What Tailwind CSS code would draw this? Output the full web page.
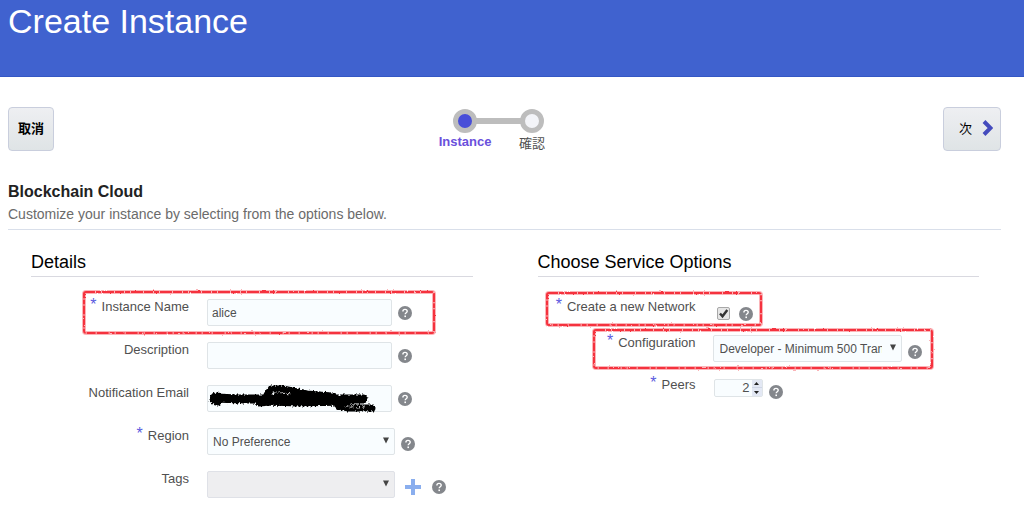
<!DOCTYPE html>
<html lang="ja">
<head>
    <meta charset="UTF-8">
    <meta name="viewport" content="width=device-width, initial-scale=1.0">
    <title>Create Instance</title>
    <script src="https://cdn.jsdelivr.net/npm/@tailwindcss/browser@4"></script>
    <style>
        body {
            font-family: 'Liberation Sans', 'Noto Sans CJK JP', sans-serif;
        }
        input[type="number"]::-webkit-inner-spin-button {
            appearance: none;
        }
    </style>
</head>
<body class="bg-white text-[13px] text-[#505050]">

    <!-- Shared icons -->
    <svg class="hidden">
        <symbol id="help" viewBox="0 0 14 14">
            <circle cx="7" cy="7" r="7" fill="#84878c"/>
            <path d="M4.9 5.5C4.9 4.1 5.8 3.4 7 3.4S9.2 4.1 9.2 5.3C9.2 6.7 7.2 6.8 7.2 8.3" fill="none" stroke="#fff" stroke-width="1.4"/>
            <rect x="6.4" y="9.5" width="1.6" height="1.6" fill="#fff"/>
        </symbol>
        <symbol id="arrow" viewBox="0 0 6 7">
            <path d="M0 0.5H6L3 6.5Z" fill="#444"/>
        </symbol>
        <filter id="rough" x="-5%" y="-20%" width="110%" height="140%">
            <feTurbulence type="fractalNoise" baseFrequency="0.35" numOctaves="2" seed="4"/>
            <feDisplacementMap in="SourceGraphic" scale="2"/>
        </filter>
        <filter id="scribble" x="-5%" y="-20%" width="110%" height="140%">
            <feTurbulence type="fractalNoise" baseFrequency="0.5" numOctaves="2" seed="7"/>
            <feDisplacementMap in="SourceGraphic" scale="5" xChannelSelector="R" yChannelSelector="G"/>
        </filter>
    </svg>

    <header class="h-[77px] bg-[#4062cf] border-b border-[#3457c4] px-2">
        <h1 class="text-[34px] leading-[42px] text-white">Create Instance</h1>
    </header>

    <main class="pl-2 pr-[23px] pt-[30px]">
        <!-- Wizard navigation -->
        <div class="flex items-start justify-between">
            <button class="h-11 w-[46px] rounded-sm border border-[#c9cedd] bg-linear-to-b from-[#eeeff2] to-[#dfe4e6] text-[13px] font-bold text-black">取消</button>
            <ol class="relative flex w-[134px] pt-[2px]">
                <li class="flex w-[67px] flex-col items-center">
                    <span class="z-10 size-6 rounded-full border-5 border-[#bdbdbd] bg-[#484ed8]"></span>
                    <span class="text-[13px] leading-[18px] font-bold text-[#6a50dc]">Instance</span>
                </li>
                <li class="flex w-[67px] flex-col items-center">
                    <span class="z-10 size-6 rounded-full border-5 border-[#bdbdbd] bg-[#f3f4f8]"></span>
                    <span class="text-[13px] leading-[22px]">確認</span>
                </li>
                <li class="absolute top-[11px] left-10 h-[6px] w-[54px] bg-[#bdbdbd]" aria-hidden="true"></li>
            </ol>
            <button class="flex h-11 w-[58px] items-center justify-between rounded-sm border border-[#c9cedd] bg-linear-to-b from-[#eeeff2] to-[#dfe4e6] pr-[7px] pl-[15px] text-[13px] text-black">
                次
                <svg class="h-[18px] w-[11px]" viewBox="0 0 11 18"><path d="M2 1.5L8.5 8L2 14.5" fill="none" stroke="#444bbd" stroke-width="4"/></svg>
            </button>
        </div>

        <div class="mt-[27px] border-b border-[#d9dfea] pb-[5px]">
            <h2 class="text-base leading-5 font-bold text-[#222]">Blockchain Cloud</h2>
            <p class="mt-[2px] text-sm leading-5 text-[#6b6b6b]">Customize your instance by selecting from the options below.</p>
        </div>

        <form class="mt-[22px] grid grid-cols-2 gap-[65px] pr-[22px] pl-[23px]">
            <section>
                <h3 class="border-b border-[#d9d9e0] pb-1 text-lg leading-5 text-black">Details</h3>
                <div class="mt-[22px] space-y-4">
                    <div class="relative flex h-[27px]">
                        <label for="name" class="mr-[18px] w-[158px] text-right leading-4"><span class="mr-[5px] align-top text-base leading-3 text-[#5b5be0]">*</span>Instance Name</label>
                        <input id="name" type="text" value="alice" class="h-[27px] w-[185px] rounded-xs border border-[#dfe4e7] bg-[#f9fdff] px-[4px] text-xs">
                        <svg class="mt-[7px] ml-[6px] size-[14px]"><use href="#help"/></svg>
                        <svg class="pointer-events-none absolute -top-[10px] left-[50px] h-[46px] w-[356px]" filter="url(#rough)">
                            <rect x="3" y="3" width="350" height="41" rx="2" fill="none" stroke="#fbb4b8" stroke-width="4"/>
                            <rect x="3" y="3" width="350" height="41" rx="2" fill="none" stroke="#f5323e" stroke-width="2" stroke-dasharray="9 1 5 1 12 1"/>
                        </svg>
                    </div>
                    <div class="flex h-[27px]">
                        <label for="description" class="mr-[18px] w-[158px] text-right leading-4">Description</label>
                        <input id="description" type="text" class="h-[27px] w-[185px] rounded-xs border border-[#dfe4e7] bg-[#f9fdff] px-[4px] text-xs">
                        <svg class="mt-[7px] ml-[6px] size-[14px]"><use href="#help"/></svg>
                    </div>
                    <div class="relative flex h-[27px]">
                        <label for="email" class="mr-[18px] w-[158px] text-right leading-4">Notification Email</label>
                        <input id="email" type="email" class="h-[27px] w-[185px] rounded-xs border border-[#dfe4e7] bg-[#f9fdff] px-[4px] text-xs">
                        <svg class="mt-[7px] ml-[6px] size-[14px]"><use href="#help"/></svg>
                        <!-- Address is scribbled out -->
                        <svg class="pointer-events-none absolute top-0 left-[176px] h-[30px] w-[180px]" viewBox="0 0 180 30" filter="url(#scribble)" fill="none" stroke="#000" stroke-linecap="round" stroke-linejoin="round">
                            <path d="M9 14H10" stroke-width="13"/>
                            <path d="M10 13L30 14L50 14L100 14L156 14" stroke-width="9"/>
                            <path d="M52 17L64 16L90 17L140 16" stroke-width="9"/>
                            <path d="M60 10L64 4L76 4L100 9L125 11" stroke-width="7"/>
                            <path d="M70 12L100 13" stroke-width="9"/>
                            <path d="M131 21L142 23L165 23" stroke-width="7"/>
                            <path d="M20 19L40 19M74 8L84 9M138 22L146 22M150 23L158 22" stroke="#fff" stroke-width="1" stroke-dasharray="3 3"/>
                        </svg>
                    </div>
                    <div class="flex h-[27px]">
                        <label for="region" class="mr-[18px] w-[158px] text-right leading-4"><span class="mr-[5px] align-top text-base leading-3 text-[#5b5be0]">*</span>Region</label>
                        <div class="relative">
                            <select id="region" class="h-[27px] w-[188px] appearance-none rounded-xs border border-[#dfe4e7] bg-[#f9fdff] px-[5px] text-xs">
                                <option>No Preference</option>
                            </select>
                            <svg class="pointer-events-none absolute top-[9px] right-[6px] h-[7px] w-[6px]"><use href="#arrow"/></svg>
                        </div>
                        <svg class="mt-[9px] ml-[6px] size-[14px]"><use href="#help"/></svg>
                    </div>
                    <div class="flex h-[27px]">
                        <label for="tags" class="mr-[18px] w-[158px] text-right leading-4">Tags</label>
                        <div class="relative">
                            <select id="tags" class="h-[27px] w-[188px] appearance-none rounded-xs border border-[#dfe1e7] bg-[#eeeef0] px-[5px] text-xs"></select>
                            <svg class="pointer-events-none absolute top-[9px] right-[6px] h-[7px] w-[6px]"><use href="#arrow"/></svg>
                        </div>
                        <button type="button" aria-label="Add tag" class="mt-[8px] ml-[10px] size-4">
                            <svg class="size-4" viewBox="0 0 16 16"><path d="M8 0V16M0 8H16" stroke="#8aaeee" stroke-width="4"/></svg>
                        </button>
                        <svg class="mt-[9px] ml-[11px] size-[14px]"><use href="#help"/></svg>
                    </div>
                </div>
            </section>

            <section>
                <h3 class="border-b border-[#d9d9e0] pb-1 text-lg leading-5 text-black">Choose Service Options</h3>
                <div class="mt-[22px]">
                    <div class="relative flex h-9">
                        <label for="network" class="mr-[21px] w-[158px] text-right leading-4"><span class="mr-[5px] align-top text-base leading-3 text-[#5b5be0]">*</span>Create a new Network</label>
                        <input id="network" type="checkbox" checked class="peer mt-2 size-[13px] appearance-none rounded-xs border border-[#a8a8a8] bg-[#e6e6e6]">
                        <svg class="pointer-events-none absolute top-2 left-[179px] hidden size-[13px] peer-checked:block" viewBox="0 0 13 13"><path d="M3 6.5L5.5 9.3L10.3 3" fill="none" stroke="#333" stroke-width="2.4"/></svg>
                        <svg class="mt-[8px] ml-[9px] size-[14px]"><use href="#help"/></svg>
                        <svg class="pointer-events-none absolute -top-[9px] left-[6px] h-[38px] w-[222px]" filter="url(#rough)">
                            <rect x="3" y="3" width="214" height="32" rx="2" fill="none" stroke="#fbb4b8" stroke-width="4"/>
                            <rect x="3" y="3" width="214" height="32" rx="2" fill="none" stroke="#f5323e" stroke-width="2" stroke-dasharray="9 1 5 1 12 1"/>
                        </svg>
                    </div>
                    <div class="relative flex h-[42px]">
                        <label for="configuration" class="mr-[17px] w-[158px] text-right leading-4"><span class="mr-[5px] align-top text-base leading-3 text-[#5b5be0]">*</span>Configuration</label>
                        <div class="relative">
                            <select id="configuration" class="h-[27px] w-[189px] appearance-none overflow-hidden rounded-xs border border-[#dfe4e7] bg-[#f9fdff] pr-[19px] pl-[6px] text-xs">
                                <option>Developer - Minimum 500 Transactions per Hour</option>
                            </select>
                            <svg class="pointer-events-none absolute top-[9px] right-[6px] h-[7px] w-[6px]"><use href="#arrow"/></svg>
                        </div>
                        <svg class="mt-[10px] ml-[6px] size-[14px]"><use href="#help"/></svg>
                        <svg class="pointer-events-none absolute -top-[8px] left-[53px] h-[44px] w-[345px]" filter="url(#rough)">
                            <rect x="3" y="3" width="338" height="38" rx="2" fill="none" stroke="#fbb4b8" stroke-width="4"/>
                            <rect x="3" y="3" width="338" height="38" rx="2" fill="none" stroke="#f5323e" stroke-width="2" stroke-dasharray="9 1 5 1 12 1"/>
                        </svg>
                    </div>
                    <div class="flex">
                        <label for="peers" class="mr-[18px] w-[158px] text-right leading-4"><span class="mr-[5px] align-top text-base leading-3 text-[#5b5be0]">*</span>Peers</label>
                        <div class="mt-[2px] flex h-[18px] w-[49px] rounded-xs border border-[#dfe4e7] bg-[#f9fdff]">
                            <input id="peers" type="number" value="2" class="w-[37px] pr-[2px] text-right text-[13px]">
                            <div class="flex w-[10px] flex-col bg-[#e3e8f4]">
                                <button type="button" aria-label="Increase" class="flex h-2 items-center justify-center border-b border-[#cfd6e6]">
                                    <svg class="h-[3px] w-[5px]" viewBox="0 0 5 3"><path d="M0 3H5L2.5 0Z" fill="#222"/></svg>
                                </button>
                                <button type="button" aria-label="Decrease" class="flex h-2 items-center justify-center">
                                    <svg class="h-[3px] w-[5px]" viewBox="0 0 5 3"><path d="M0 0H5L2.5 3Z" fill="#222"/></svg>
                                </button>
                            </div>
                        </div>
                        <svg class="mt-2 ml-[6px] size-[14px]"><use href="#help"/></svg>
                    </div>
                </div>
            </section>
        </form>
    </main>

</body>
</html>
